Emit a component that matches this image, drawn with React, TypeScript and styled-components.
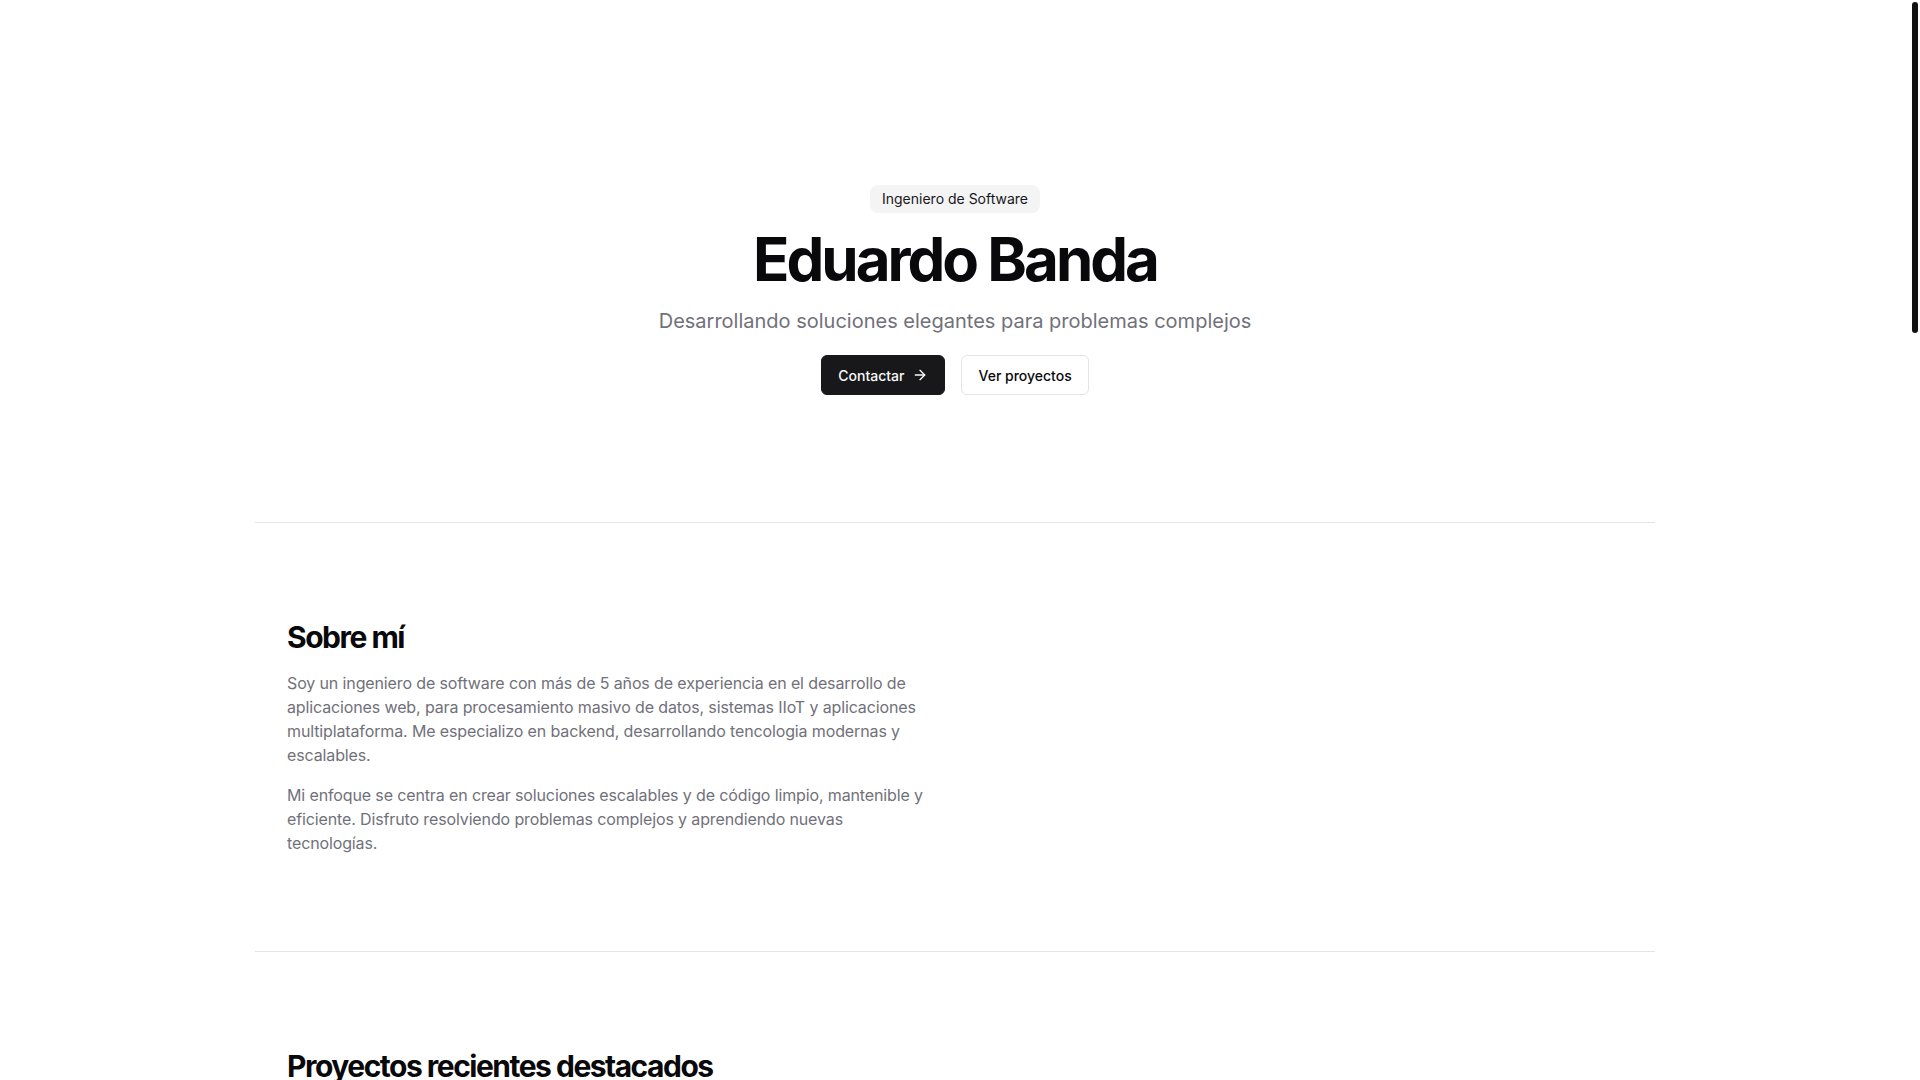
import styled, { createGlobalStyle } from 'styled-components';
import { ArrowRight, Github, ExternalLink, Mail, Linkedin } from 'lucide-react';

const PROJECTS = [
  {
    title: 'Plataforma de monitoreo IIoT',
    description: 'Sistema de adquisición y visualización de datos de sensores industriales en tiempo real.',
    tags: ['Go', 'MQTT', 'TimescaleDB'],
  },
  {
    title: 'Pipeline de procesamiento de datos',
    description: 'Procesamiento masivo de eventos con colas distribuidas y almacenamiento escalable.',
    tags: ['Python', 'Kafka', 'Spark'],
  },
  {
    title: 'App multiplataforma',
    description: 'Aplicación móvil y de escritorio con sincronización offline y backend propio.',
    tags: ['Flutter', 'Node.js', 'PostgreSQL'],
  },
];

const EXPERIENCE = [
  { role: 'Ingeniero de Software Senior', company: 'Empresa Tecnológica', period: '2022 — Presente' },
  { role: 'Desarrollador Backend', company: 'Startup de Datos', period: '2020 — 2022' },
  { role: 'Desarrollador Full Stack', company: 'Consultora de Software', period: '2019 — 2020' },
];

const SKILLS = ['TypeScript', 'Go', 'Python', 'Node.js', 'PostgreSQL', 'Docker', 'Kubernetes', 'AWS', 'Kafka', 'React'];

export default function App() {
  return (
    <>
      <GlobalStyle />
      <ScrollTrack>
        <ScrollThumb />
      </ScrollTrack>
      <Main>
        <Hero>
          <Badge>Ingeniero de Software</Badge>
          <Title>Eduardo Banda</Title>
          <Subtitle>Desarrollando soluciones elegantes para problemas complejos</Subtitle>
          <Actions>
            <Button $variant="primary">
              Contactar
              <ArrowRight size={16} strokeWidth={2} />
            </Button>
            <Button $variant="outline">Ver proyectos</Button>
          </Actions>
        </Hero>

        <Section>
          <TwoColumns>
            <div>
              <SectionTitle>Sobre mí</SectionTitle>
              <Paragraph>
                Soy un ingeniero de software con más de 5 años de experiencia en el desarrollo de aplicaciones web, para procesamiento masivo de datos, sistemas IIoT y aplicaciones multiplataforma. Me especializo en backend, desarrollando tencologia modernas y escalables.
              </Paragraph>
              <Paragraph>
                Mi enfoque se centra en crear soluciones escalables y de código limpio, mantenible y eficiente. Disfruto resolviendo problemas complejos y aprendiendo nuevas tecnologías.
              </Paragraph>
            </div>
            <div />
          </TwoColumns>
        </Section>

        <Section>
          <SectionTitle>Proyectos recientes destacados</SectionTitle>
          <ProjectGrid>
            {PROJECTS.map((project) => (
              <Card key={project.title}>
                <CardCover />
                <CardBody>
                  <CardTitle>{project.title}</CardTitle>
                  <Paragraph>{project.description}</Paragraph>
                  <Tags>
                    {project.tags.map((tag) => (
                      <Tag key={tag}>{tag}</Tag>
                    ))}
                  </Tags>
                  <CardLinks>
                    <Button $variant="outline">
                      <Github size={16} />
                      Código
                    </Button>
                    <Button $variant="outline">
                      <ExternalLink size={16} />
                      Demo
                    </Button>
                  </CardLinks>
                </CardBody>
              </Card>
            ))}
          </ProjectGrid>
        </Section>

        <Section>
          <SectionTitle>Experiencia</SectionTitle>
          <Timeline>
            {EXPERIENCE.map((item) => (
              <TimelineItem key={item.role}>
                <CardTitle>{item.role}</CardTitle>
                <Paragraph>{item.company}</Paragraph>
                <Period>{item.period}</Period>
              </TimelineItem>
            ))}
          </Timeline>
        </Section>

        <Section>
          <SectionTitle>Habilidades</SectionTitle>
          <Tags>
            {SKILLS.map((skill) => (
              <Badge key={skill}>{skill}</Badge>
            ))}
          </Tags>
        </Section>

        <Section>
          <SectionTitle>Contacto</SectionTitle>
          <Paragraph>¿Tienes un proyecto en mente? Escríbeme y conversemos.</Paragraph>
          <Actions $align="start">
            <Button $variant="primary">
              <Mail size={16} />
              Enviar correo
            </Button>
            <Button $variant="outline">
              <Linkedin size={16} />
              LinkedIn
            </Button>
          </Actions>
        </Section>

        <Footer>© 2025 Eduardo Banda. Todos los derechos reservados.</Footer>
      </Main>
    </>
  );
}

const GlobalStyle = createGlobalStyle`
  html {
    background: #ffffff;
  }

  body {
    margin: 0;
    padding-right: 10px;
    font-family: Inter, "Noto Sans", "Liberation Sans", sans-serif;
    color: #09090b;
    -webkit-font-smoothing: antialiased;
  }
`;

const ScrollTrack = styled.div`
  position: fixed;
  top: 0;
  right: 0;
  bottom: 0;
  width: 10px;
  background: #ffffff;
  z-index: 10;
`;

const ScrollThumb = styled.div`
  margin: 2px 2px 0;
  height: 331px;
  border-radius: 3px;
  background: #111111;
`;

const Main = styled.main`
  max-width: 1400px;
  margin: 0 auto;
`;

const Hero = styled.header`
  display: flex;
  flex-direction: column;
  align-items: center;
  padding: 185px 32px 127px;
  text-align: center;
`;

const Badge = styled.span`
  display: inline-flex;
  align-items: center;
  height: 28px;
  padding: 0 12px;
  border-radius: 8px;
  background: #f4f4f5;
  color: #18181b;
  font-size: 14px;
  line-height: 20px;
`;

const Title = styled.h1`
  margin: 16px 0 0;
  font-size: 60px;
  line-height: 1;
  font-weight: 700;
  letter-spacing: -0.05em;
  color: #09090b;
`;

const Subtitle = styled.p`
  margin: 18px 0 0;
  font-size: 20px;
  line-height: 28px;
  color: #71717a;
`;

const Actions = styled.div<{ $align?: 'start' | 'center' }>`
  display: flex;
  gap: 16px;
  margin-top: 20px;
  justify-content: ${(p) => (p.$align === 'start' ? 'flex-start' : 'center')};
`;

const Button = styled.button<{ $variant: 'primary' | 'outline' }>`
  display: inline-flex;
  align-items: center;
  gap: 8px;
  height: 40px;
  padding: 0 16px;
  border-radius: 6px;
  font-family: inherit;
  font-size: 14px;
  font-weight: 500;
  cursor: pointer;
  border: 1px solid ${(p) => (p.$variant === 'primary' ? '#18181b' : '#e4e4e7')};
  background: ${(p) => (p.$variant === 'primary' ? '#18181b' : '#ffffff')};
  color: ${(p) => (p.$variant === 'primary' ? '#fafafa' : '#09090b')};
`;

const Section = styled.section`
  border-top: 1px solid #e4e4e7;
  padding: 96px 32px;
`;

const TwoColumns = styled.div`
  display: grid;
  grid-template-columns: 1fr 1fr;
  gap: 48px;
`;

const SectionTitle = styled.h2`
  margin: 0 0 16px;
  font-size: 30px;
  line-height: 36px;
  font-weight: 700;
  letter-spacing: -0.05em;
  color: #09090b;
`;

const Paragraph = styled.p`
  margin: 0 0 16px;
  font-size: 16px;
  line-height: 24px;
  letter-spacing: -0.008em;
  color: #71717a;

  &:last-child {
    margin-bottom: 0;
  }
`;

const ProjectGrid = styled.div`
  display: grid;
  grid-template-columns: repeat(3, 1fr);
  gap: 24px;
  margin-top: 32px;
`;

const Card = styled.article`
  display: flex;
  flex-direction: column;
  border: 1px solid #e4e4e7;
  border-radius: 8px;
  overflow: hidden;
`;

const CardCover = styled.div`
  height: 240px;
  background: #f4f4f5;
`;

const CardBody = styled.div`
  display: flex;
  flex-direction: column;
  gap: 12px;
  padding: 24px;
`;

const CardTitle = styled.h3`
  margin: 0;
  font-size: 20px;
  line-height: 28px;
  font-weight: 600;
  letter-spacing: -0.01em;
`;

const Tags = styled.div`
  display: flex;
  flex-wrap: wrap;
  gap: 8px;
`;

const Tag = styled.span`
  padding: 2px 10px;
  border-radius: 9999px;
  border: 1px solid #e4e4e7;
  font-size: 12px;
  line-height: 18px;
  color: #3f3f46;
`;

const CardLinks = styled.div`
  display: flex;
  gap: 12px;
  margin-top: 8px;
`;

const Timeline = styled.div`
  display: flex;
  flex-direction: column;
  gap: 32px;
  margin-top: 32px;
  padding-left: 24px;
  border-left: 2px solid #e4e4e7;
`;

const TimelineItem = styled.div`
  display: flex;
  flex-direction: column;
  gap: 4px;
`;

const Period = styled.span`
  font-size: 14px;
  color: #a1a1aa;
`;

const Footer = styled.footer`
  border-top: 1px solid #e4e4e7;
  padding: 32px;
  text-align: center;
  font-size: 14px;
  color: #71717a;
`;
